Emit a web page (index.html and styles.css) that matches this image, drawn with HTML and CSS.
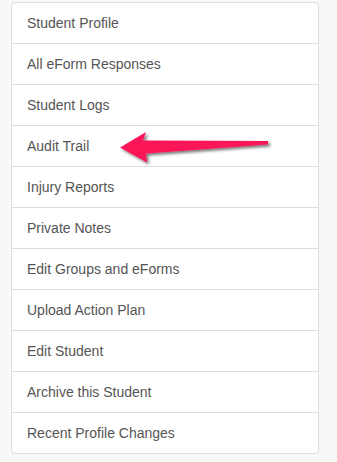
FILE: index.html
```html
<!DOCTYPE html>
<html>
<head>
<meta charset="utf-8">
<link rel="stylesheet" href="styles.css">
</head>
<body>
<div class="panel">
  <ul class="list-group">
    <li class="item">Student Profile</li>
    <li class="item">All eForm Responses</li>
    <li class="item">Student Logs</li>
    <li class="item">Audit Trail</li>
    <li class="item">Injury Reports</li>
    <li class="item">Private Notes</li>
    <li class="item">Edit Groups and eForms</li>
    <li class="item">Upload Action Plan</li>
    <li class="item">Edit Student</li>
    <li class="item">Archive this Student</li>
    <li class="item">Recent Profile Changes</li>
  </ul>
  <svg class="arrow" width="337" height="462" viewBox="0 0 337 462">
    <defs>
      <filter id="sh" x="-20%" y="-50%" width="140%" height="200%">
        <feGaussianBlur in="SourceAlpha" stdDeviation="1.5"/>
        <feOffset dx="2" dy="2" result="b"/>
        <feComponentTransfer><feFuncA type="linear" slope="0.55"/></feComponentTransfer>
        <feMerge><feMergeNode/><feMergeNode in="SourceGraphic"/></feMerge>
      </filter>
    </defs>
    <polygon filter="url(#sh)" fill="#fb1558" points="120,147.5 146,132 143,140.5 268,141 268,144.5 146,153.5 147,162.5"/>
  </svg>
</div>
</body>
</html>
```
FILE: styles.css
```css
html, body {
  margin: 0;
  padding: 0;
  background: #f8f8f8;
}
body {
  width: 337px;
  height: 462px;
  overflow: hidden;
  font-family: "Liberation Sans", Arial, sans-serif;
  font-size: 14px;
  line-height: 20px;
  color: #555;
}
.panel {
  position: relative;
  padding: 2px 0 0 11px;
}
.list-group {
  list-style: none;
  margin: 0;
  padding: 0;
  width: 308px;
}
.item {
  background: #fff;
  border: 1px solid #ddd;
  padding: 10px 15px;
  margin-bottom: -1px;
}
.item:first-child {
  border-radius: 4px 4px 0 0;
}
.item:last-child {
  border-radius: 0 0 4px 4px;
}
.arrow {
  position: absolute;
  left: 0;
  top: 0;
}
```
